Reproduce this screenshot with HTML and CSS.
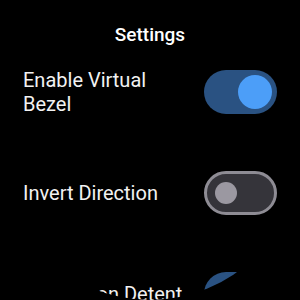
FILE: index.html
```html
<html>
<head>
	<title>Settings</title>
	<link rel="stylesheet" href="styles.css">
</head>
<body>
	<div id="screen">
		<div id="title">Settings</div>
		<div id="list">
			<div class="row">
				<div class="label">Enable Virtual<br>Bezel</div>
				<div class="toggle on"><div class="thumb"></div></div>
			</div>
			<div class="row">
				<div class="label">Invert Direction</div>
				<div class="toggle"><div class="thumb"></div></div>
			</div>
			<div class="row">
				<div class="label">Haptics on Detent</div>
				<div class="toggle on"><div class="thumb"></div></div>
			</div>
		</div>
	</div>
</body>
</html>
```

FILE: styles.css
```css
*
{
	font-family: Roboto, "Noto Sans", sans-serif;
	box-sizing: border-box;
}
body
{
	background-color: #000000;
	margin: 0px;
	padding: 0px;
	overflow: hidden;
}
#screen
{
	width: 300px;
	height: 300px;
	border-radius: 50%;
	overflow: hidden;
	background-color: #000000;
}
#title
{
	padding: 23px 0px 0px 0px;
	text-align: center;
	color: #ffffff;
	font-size: 19px;
	font-weight: 500;
	line-height: 24px;
}
#list
{
	display: flex;
	flex-direction: column;
	gap: 57px;
	padding: 23px 23px 0px 23px;
}
.row
{
	display: flex;
	align-items: center;
	justify-content: space-between;
	height: 44px;
}
.label
{
	color: #f2f2f2;
	font-size: 20px;
	line-height: 24px;
}
.toggle
{
	display: flex;
	align-items: center;
	justify-content: flex-start;
	width: 73px;
	height: 44px;
	padding: 0px 8px;
	border: 3px solid #8e8c94;
	border-radius: 22px;
	background-color: #35343a;
	flex-shrink: 0;
}
.toggle .thumb
{
	width: 22px;
	height: 22px;
	border-radius: 50%;
	background-color: #9b98a1;
}
.toggle.on
{
	justify-content: flex-end;
	padding: 0px 5px;
	border: none;
	background-color: #2a5282;
}
.toggle.on .thumb
{
	width: 34px;
	height: 34px;
	background-color: #4c9ef8;
}
```
